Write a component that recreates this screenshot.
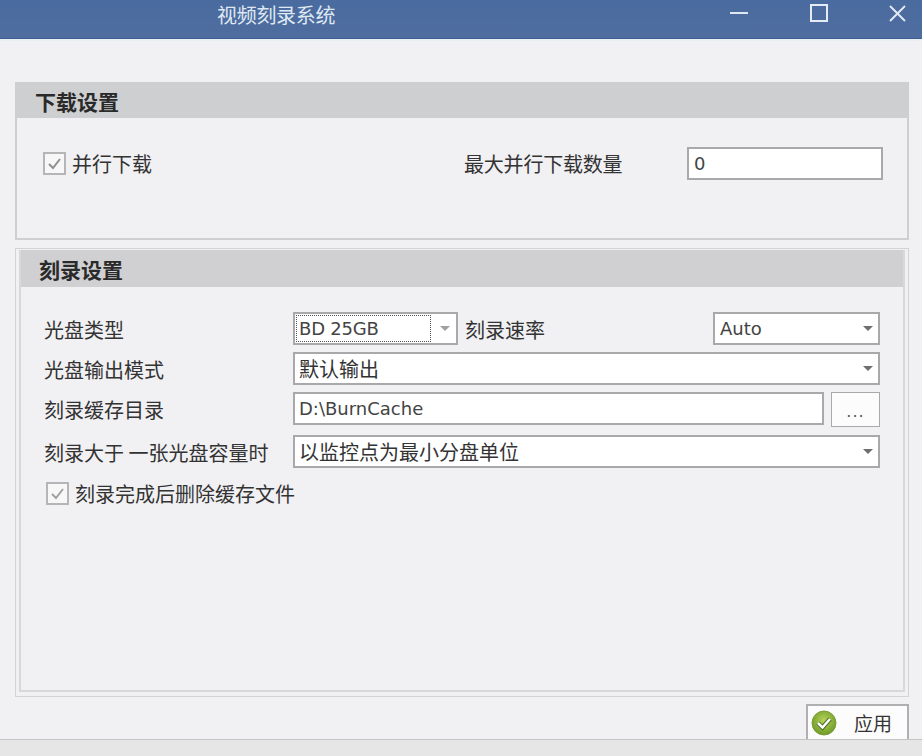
<div class="window">
  <header class="titlebar">
    <span class="title">视频刻录系统</span>
    <div class="controls">
      <svg class="ctl min" width="18" height="4" viewBox="0 0 18 4"><path d="M0 2H18" stroke="#dfe8f2" stroke-width="2" /></svg>
      <svg class="ctl max" width="18" height="18" viewBox="0 0 18 18"><rect x="1" y="1" width="16" height="16" fill="none" stroke="#e4ebf4" stroke-width="2" /></svg>
      <svg class="ctl close" width="17" height="17" viewBox="0 0 17 17"><path d="M1 1L16 16M16 1L1 16" stroke="#e4ebf4" stroke-width="1.8" /></svg>
    </div>
  </header>

  <main class="content">
    <section class="panel first">
      <h2 class="head h1">下载设置</h2>
      <div class="parallel">
        <label class="check">
          <span class="box"><svg width="15" height="13" viewBox="0 0 15 13"><path d="M2 7L6 11L13 2" fill="none" stroke="#8f8f8f" stroke-width="2" /></svg></span>
          <span>并行下载</span>
        </label>
        <span class="maxlabel">最大并行下载数量</span>
        <div class="field count">0</div>
      </div>
    </section>

    <section class="panel second">
      <div class="inner">
        <h2 class="head h2">刻录设置</h2>
        <div class="form">
          <div class="row r1">
            <span class="lbl">光盘类型</span>
            <div class="field combo type"><span class="focus">BD 25GB</span><i class="arrow light"></i></div>
            <span class="speed">刻录速率</span>
            <div class="field combo auto"><span>Auto</span><i class="arrow"></i></div>
          </div>
          <div class="row r2">
            <span class="lbl">光盘输出模式</span>
            <div class="field combo grow"><span class="cjk">默认输出</span><i class="arrow"></i></div>
          </div>
          <div class="row r3">
            <span class="lbl">刻录缓存目录</span>
            <div class="field grow">D:\BurnCache</div>
            <div class="dots">...</div>
          </div>
          <div class="row r4">
            <span class="lbl">刻录大于 一张光盘容量时</span>
            <div class="field combo grow"><span class="cjk">以监控点为最小分盘单位</span><i class="arrow"></i></div>
          </div>
          <label class="check del">
            <span class="box"><svg width="15" height="13" viewBox="0 0 15 13"><path d="M2 7L6 11L13 2" fill="none" stroke="#a0a0a0" stroke-width="2" /></svg></span>
            <span>刻录完成后删除缓存文件</span>
          </label>
        </div>
      </div>
    </section>

    <div class="actions">
      <div class="apply">
        <svg width="26" height="26" viewBox="0 0 26 26">
          <defs>
            <radialGradient id="g" cx="50%" cy="40%" r="60%">
              <stop offset="0" stop-color="#b7d35a" />
              <stop offset="1" stop-color="#6c9a26" />
            </radialGradient>
          </defs>
          <circle cx="13" cy="13" r="12" fill="url(#g)" stroke="#7d9c3c" />
          <path d="M7 13L11.5 17.5L19 9" fill="none" stroke="#4d6b22" stroke-width="4.5" />
          <path d="M7 13L11.5 17.5L19 9" fill="none" stroke="#fff" stroke-width="2.5" />
        </svg>
        <span>应用</span>
      </div>
    </div>
  </main>

  <footer class="status"></footer>
</div>

<style>
  :global(body) {
    margin: 0;
    background: #f1f0f3;
  }
  .window {
    width: 922px;
    height: 756px;
    display: flex;
    flex-direction: column;
    overflow: hidden;
    background: #f1f0f3;
    color: #333;
    font-family: "DejaVu Sans", "Noto Sans CJK SC", sans-serif;
    font-size: 18px;
  }
  .titlebar {
    flex: none;
    height: 39px;
    box-sizing: border-box;
    border-bottom: 1px solid #3f6094;
    background: linear-gradient(#4a6b9f, #4f6d9f);
    display: flex;
    justify-content: space-between;
    padding-left: 217px;
  }
  .title {
    font-family: "Noto Sans CJK SC", sans-serif;
    font-size: 20px;
    line-height: 29px;
    letter-spacing: -0.3px;
    color: #dfe8f2;
  }
  .controls {
    display: flex;
    align-items: flex-start;
  }
  .ctl {
    display: block;
  }
  .min {
    margin-top: 11px;
    margin-right: 62px;
  }
  .max {
    margin-top: 4px;
    margin-right: 61px;
  }
  .close {
    margin-top: 5px;
    margin-right: 16px;
  }
  .content {
    flex: 1;
    min-height: 0;
    display: flex;
    flex-direction: column;
    padding: 41px 13px 0 15px;
    border-top: 2px solid #e9eef1;
    box-sizing: border-box;
  }
  .panel {
    box-sizing: border-box;
    flex: none;
  }
  .first {
    height: 158px;
    border: 2px solid #cfcfd1;
    border-top: 0;
  }
  .head {
    margin: 0;
    height: 36px;
    background: #cecfd1;
    font-family: "Noto Sans CJK SC", sans-serif;
    font-size: 21px;
    font-weight: 700;
    line-height: 38px;
    color: #2a2a2a;
    box-sizing: border-box;
  }
  .h1 {
    padding-left: 18px;
  }
  .parallel {
    display: flex;
    align-items: center;
    height: 33px;
    margin-top: 29px;
    padding-left: 26px;
  }
  .check {
    display: flex;
    align-items: center;
    gap: 6px;
    font-family: "Noto Sans CJK SC", sans-serif;
    font-size: 20px;
  }
  .parallel .check {
    width: 421px;
  }
  .box {
    flex: none;
    width: 23px;
    height: 23px;
    box-sizing: border-box;
    border: 2px solid #b5b5b8;
    background: #f7f7f8;
    display: flex;
    align-items: center;
    justify-content: center;
  }
  .maxlabel {
    width: 223px;
    font-family: "Noto Sans CJK SC", sans-serif;
    font-size: 20px;
    letter-spacing: -0.2px;
  }
  .field {
    box-sizing: border-box;
    height: 33px;
    border: 2px solid #a9a9ab;
    background: #fff;
    display: flex;
    align-items: center;
    padding-left: 4px;
    line-height: 1;
    color: #444;
    font-family: "DejaVu Sans", "Noto Sans CJK SC", sans-serif;
    font-size: 18px;
    white-space: nowrap;
  }
  .cjk {
    font-family: "Noto Sans CJK SC", sans-serif;
    font-size: 20px;
    color: #333;
  }
  .count {
    width: 196px;
    padding-left: 5px;
  }
  .second {
    height: 449px;
    margin-top: 8px;
    border: 1px solid #d3d3d6;
    padding: 1px 3px 4px;
  }
  .inner {
    height: 100%;
    box-sizing: border-box;
    border: 2px solid #d8d8db;
    border-top: 0;
  }
  .h2 {
    height: 37px;
    padding-left: 18px;
    background: #d0d0d3;
  }
  .form {
    padding: 25px 23px 0 23px;
    display: flex;
    flex-direction: column;
  }
  .row {
    display: flex;
    align-items: flex-start;
  }
  .r2 {
    margin-top: 7px;
  }
  .r3 {
    margin-top: 7px;
  }
  .r4 {
    margin-top: 8px;
  }
  .lbl {
    flex: none;
    width: 249px;
    height: 33px;
    line-height: 36px;
    font-family: "Noto Sans CJK SC", sans-serif;
    font-size: 20px;
    white-space: nowrap;
  }
  .combo {
    justify-content: space-between;
  }
  .grow {
    flex: 1;
  }
  .type {
    width: 165px;
    padding-left: 1px;
  }
  .focus {
    flex: none;
    box-sizing: border-box;
    width: 135px;
    align-self: stretch;
    margin: 1px 0;
    border: 1px dotted #555;
    display: flex;
    align-items: center;
    padding-left: 2px;
    letter-spacing: -0.2px;
  }
  .speed {
    width: 248px;
    height: 33px;
    margin-left: 7px;
    line-height: 36px;
    font-family: "Noto Sans CJK SC", sans-serif;
    font-size: 20px;
  }
  .auto {
    width: 167px;
    padding-left: 5px;
  }
  .arrow {
    flex: none;
    width: 0;
    height: 0;
    margin-right: 5px;
    border-left: 5px solid transparent;
    border-right: 5px solid transparent;
    border-top: 5px solid #6f6f72;
  }
  .arrow.light {
    border-top-color: #a0a0a3;
    margin-right: 6px;
  }
  .dots {
    flex: none;
    box-sizing: border-box;
    width: 49px;
    height: 35px;
    margin-left: 7px;
    border: 1px solid #a9a9ab;
    background: #fcfcfc;
    text-align: center;
    line-height: 38px;
    font-size: 16px;
    letter-spacing: 1px;
    color: #555;
  }
  .del {
    margin-top: 9px;
    margin-left: 2px;
    height: 33px;
  }
  .actions {
    display: flex;
    justify-content: flex-end;
    margin-top: 7px;
    flex: 1;
    min-height: 0;
  }
  .apply {
    box-sizing: border-box;
    width: 103px;
    border: 2px solid #b0b0b3;
    border-bottom: 0;
    background: #fcfcfc;
    display: flex;
    align-items: center;
    padding-left: 3px;
    gap: 17px;
    font-family: "Noto Sans CJK SC", sans-serif;
    font-size: 19px;
  }
  .status {
    flex: none;
    height: 17px;
    box-sizing: border-box;
    border-top: 1px solid #c4c4c6;
    background: #e6e6e6;
  }
</style>
